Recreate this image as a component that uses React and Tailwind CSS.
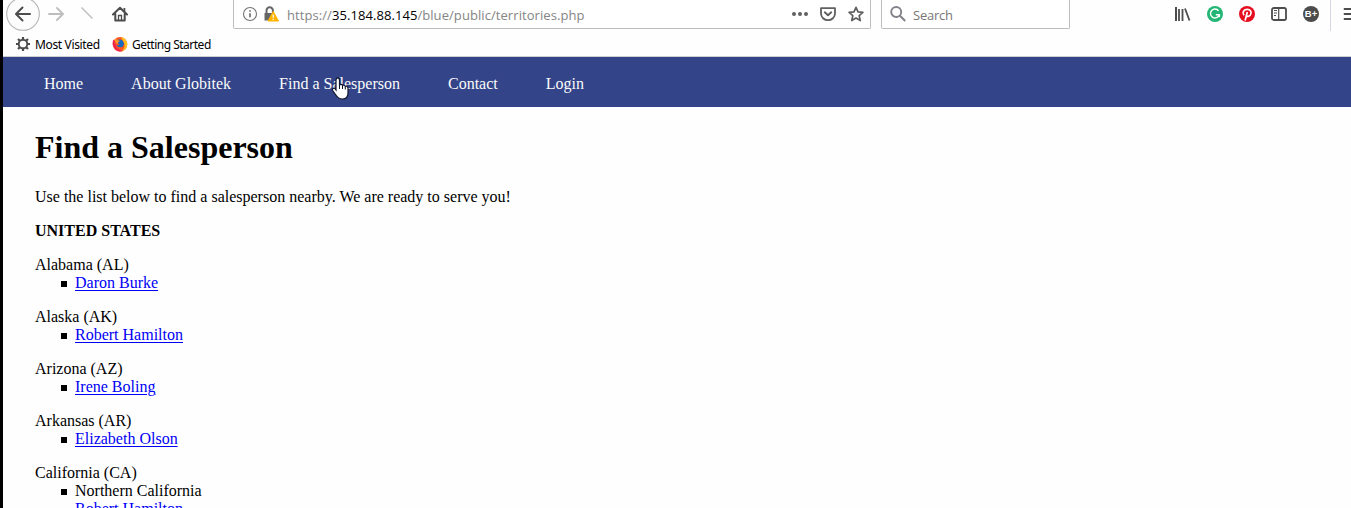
import React from "react";

const S = ({ w = 16, h = 16, className = "", children }) => (
  <svg width={w} height={h} viewBox={`0 0 ${w} ${h}`} fill="none" className={`block shrink-0 ${className}`}>
    {children}
  </svg>
);

function Toolbar() {
  return (
    <div className="flex h-7 shrink-0 items-center">
      <S w={36} h={36} className="ml-[2px]">
        <circle cx="18" cy="18" r="16.3" fill="#fcfcfc" stroke="#b5b5b5" strokeWidth="1.1" />
        <path d="M25 18H11.5M17.5 11.5L11 18l6.5 6.5" stroke="#4c4c4c" strokeWidth="2" strokeLinecap="round" strokeLinejoin="round" />
      </S>
      <S className="ml-[7px]">
        <path d="M1 8h13.5M9 2l6 6-6 6" stroke="#bdbdbd" strokeWidth="1.8" strokeLinecap="round" strokeLinejoin="round" />
      </S>
      <S className="ml-4">
        <path d="M1.500 1.500l11 11" stroke="#c0c0c0" strokeWidth="1.500" />
      </S>
      <S className="ml-4">
        <path d="M1 8.5L8 1.7l7 6.8M3.3 8v6.6h9.4V8" stroke="#4c4c4c" strokeWidth="2" strokeLinejoin="round" strokeLinecap="round" />
        <path d="M6.5 14V9.5h3V14" stroke="#4c4c4c" strokeWidth="1.3" />
        <path d="M11.5 2h1.8v4l-1.8-1.5z" fill="#4c4c4c" />
      </S>
      <div className="ml-[105px] flex h-[29px] w-[638px] shrink-0 items-center self-start rounded-b-[2px] border border-t-0 border-[#bcbcbc] bg-white">
        <S className="ml-2">
          <circle cx="8" cy="8" r="6.5" stroke="#737373" strokeWidth="1.1" />
          <path d="M8 7.2v4M8 4.2v1.6" stroke="#666666" strokeWidth="1.6" />
        </S>
        <S className="ml-[5px]">
          <path d="M3.5 7V4.5a3.2 3.2 0 0 1 6.4 0V7" stroke="#666666" strokeWidth="2" />
          <path d="M1.5 7h9v7.5h-9z" fill="#666666" />
          <path d="M10.2 5.5L15.5 15H5z" fill="#ffb300" stroke="#ffb300" strokeLinejoin="round" />
          <path d="M10.2 8.5v3.3M10.2 12.8v1.3" stroke="#fff" strokeWidth="1.2" />
        </S>
        <span className="ml-2 w-[504px] shrink-0 whitespace-nowrap pt-[2px] font-['Open_Sans',sans-serif] text-[13px] leading-5 tracking-[0.07px] text-[#858585]">
          https://<span className="text-black">35.184.88.145</span>/blue/public/territories.php
        </span>
        <S w={18}>
          <circle cx="3" cy="8" r="2" fill="#606060" />
          <circle cx="9" cy="8" r="2" fill="#606060" />
          <circle cx="15" cy="8" r="2" fill="#606060" />
        </S>
        <S className="ml-[11px]">
          <path d="M1 2.2h14v5.3a7 6.7 0 0 1-14 0z" stroke="#606060" strokeWidth="1.8" strokeLinejoin="round" />
          <path d="M4.8 6.3L8 9.3l3.2-3" stroke="#606060" strokeWidth="1.9" strokeLinecap="round" strokeLinejoin="round" />
        </S>
        <S className="ml-3">
          <path d="M8 1.4l2 4.5 4.9.5-3.7 3.3 1.1 4.9L8 12.1l-4.3 2.5 1.1-4.9L1.1 6.4 6 5.9z" stroke="#606060" strokeWidth="1.7" strokeLinejoin="round" />
        </S>
      </div>
      <div className="ml-[10px] flex h-[29px] w-[189px] shrink-0 items-center self-start rounded-b-[2px] border border-t-0 border-[#bcbcbc] bg-white">
        <S className="ml-2">
          <circle cx="6.2" cy="6" r="5" stroke="#85818a" strokeWidth="1.9" />
          <path d="M10 9.8l5.2 5.2" stroke="#85818a" strokeWidth="2" />
        </S>
        <span className="ml-[7px] pt-[2px] font-['Open_Sans',sans-serif] text-[13px] leading-5 tracking-[-0.25px] text-[#777777]">Search</span>
      </div>
      <S className="ml-[105px]">
        <path d="M1 1v14" stroke="#4c4c4c" strokeWidth="2" />
        <path d="M4 3v12M7.500 3v12" stroke="#4c4c4c" strokeWidth="1.800" />
        <path d="M10 2.500L14.500 14.500" stroke="#4c4c4c" strokeWidth="1.800" />
      </S>
      <S className="ml-4">
        <circle cx="8" cy="8" r="8" fill="#23b574" />
        <path d="M11.6 4.8A4.5 4.5 0 1 0 12.2 9M8.8 8.7h3.6v2.6" stroke="#fff" strokeWidth="1.4" />
      </S>
      <S className="ml-4">
        <circle cx="8" cy="8" r="8" fill="#e60f1f" />
        <path d="M5 9.2C2.7 6.4 5 3.4 8.3 3.4c3 0 4.2 2 3.6 4.2-.7 3-3.7 3.7-4.4 1.6M8.3 6l-2.2 8.5" stroke="#fff" strokeWidth="1.7" />
      </S>
      <S className="ml-4">
        <rect x="1" y="2" width="14" height="12" rx="1.8" stroke="#4c4c4c" strokeWidth="1.8" />
        <path d="M7.7 2v12" stroke="#4c4c4c" strokeWidth="1.2" />
        <path d="M3 4.5h3M3 7h3M3 9.5h2" stroke="#4c4c4c" />
      </S>
      <span className="ml-4 flex size-4 shrink-0 items-center justify-center rounded-full bg-[#4c4c4c] font-['Liberation_Sans',sans-serif] text-[9.5px] font-bold leading-4 text-white">B+</span>
      <div className="ml-[11px] h-[31px] w-px shrink-0 self-start bg-[#d7d7e4]" />
      <S className="ml-[12px]">
        <path d="M1.5 3H15M1.5 8H15M1.5 13H15" stroke="#4c4c4c" strokeWidth="1.8" strokeLinecap="round" />
      </S>
    </div>
  );
}

function Bookmarks() {
  return (
    <div className="flex h-8 shrink-0 items-center pl-[12px] font-['Noto_Sans',sans-serif] text-[12px] leading-4 text-black">
      <S>
        <circle cx="8" cy="8" r="4.3" stroke="#4c4c4c" strokeWidth="1.9" />
        <path d="M8 1v2.5M8 12.5V15M1 8h2.5M12.5 8H15M3 3l1.8 1.8M11.2 11.2L13 13M13 3l-1.8 1.8M4.8 11.2L3 13" stroke="#4c4c4c" strokeWidth="2.2" />
      </S>
      <span className="ml-1 w-[65px] whitespace-nowrap pt-[2px] tracking-[-0.35px]">Most Visited</span>
      <S className="ml-3">
        <circle cx="8" cy="8.3" r="7.3" fill="#ff5722" />
        <path d="M9 .7c4 1.2 6.4 4.2 6.2 8.3-.3 3.5-3 6-6.4 6.6 3-2 4.3-4 3.8-7C12.200 5.500 10 4 9 .7z" fill="#ffc21a" />
        <path d="M1.200 3.500C.2 7 .5 11 4 14c2 1.700 5.500 2 7.500.8C7 14.500 3 11 3.200 6z" fill="#f0254b" />
        <path d="M5 4.300C7 2.500 11 3.500 11.700 6.700c.6 2.800-1.200 4.600-3.500 4.600-1.800 0-3-.8-3.600-2l3.200-.4-1.900-1.800z" fill="#1769c2" />
        <path d="M3 2.500l3 1.700 2 .5-1.600 1.600-1.200 2L3 6z" fill="#ff9326" />
      </S>
      <span className="ml-1 whitespace-nowrap pt-[2px] tracking-[-0.5px]">Getting Started</span>
    </div>
  );
}

const people = [
  ["Alabama (AL)", "Daron Burke"],
  ["Alaska (AK)", "Robert Hamilton"],
  ["Arizona (AZ)", "Irene Boling"],
  ["Arkansas (AR)", "Elizabeth Olson"],
];

const Item = ({ children }) => (
  <li className="flex">
    <span className="ml-[26px] mt-[7px] mr-2 size-[6px] shrink-0 bg-black" />
    {children}
  </li>
);

const Person = ({ children }) => (
  <a href="#" className="text-[#0000f5] underline decoration-1 underline-offset-2">{children}</a>
);

export default function App() {
  return (
    <div className="flex h-[508px] w-[1351px] overflow-hidden bg-black font-['Liberation_Serif',serif] text-[16px] leading-[18px] text-black">
      <div className="ml-[3px] flex w-[1348px] shrink-0 flex-col overflow-hidden bg-[#fefefe]">
        <Toolbar />
        <div className="flex h-[29px] shrink-0 items-center border-b border-[#cfcfd2] pt-[4px]">
          <Bookmarks />
        </div>
        <nav className="relative flex h-[50px] shrink-0 items-center gap-12 bg-[#334488] pl-[41px] pt-[4px] text-[#fafafa]">
          <a href="#">Home</a>
          <a href="#">About Globitek</a>
          <a href="#">Find a Salesperson</a>
          <a href="#">Contact</a>
          <a href="#">Login</a>
          <svg className="absolute left-[328px] top-[19px]" width="19" height="25" viewBox="0 0 19 25">
            <path d="M5 14V4.200C5 1.200 8.500 1.200 8.500 4.200V9c1-1 2.800-.7 3 .5 1-.8 2.600-.3 2.800 1 1.200-.6 2.700 0 2.700 1.600V17c0 4-2 6-5.500 6C7.500 23 6 21 4.500 18.500L1.700 14.500C.7 12.700 3 11.500 4 12.700z" fill="#fff" stroke="#10172c" strokeWidth="1.200" />
            <path d="M8.500 9v4M11.500 10v3M14.300 11v2.500" stroke="#10172c" />
          </svg>
        </nav>
        <main className="flex shrink-0 flex-col pl-8">
          <h1 className="mt-[22px] text-[32px] font-bold leading-9">Find a Salesperson</h1>
          <p className="mt-[23px]">Use the list below to find a salesperson nearby. We are ready to serve you!</p>
          <p className="mt-4 font-bold">UNITED STATES</p>
          {people.map(([state, name]) => (
            <section key={state} className="mt-4">
              <p>{state}</p>
              <ul><Item><Person>{name}</Person></Item></ul>
            </section>
          ))}
          <section className="mt-4">
            <p>California (CA)</p>
            <ul>
              <Item>Northern California</Item>
              <li className="pl-10"><Person>Robert Hamilton</Person></li>
            </ul>
          </section>
        </main>
      </div>
    </div>
  );
}
